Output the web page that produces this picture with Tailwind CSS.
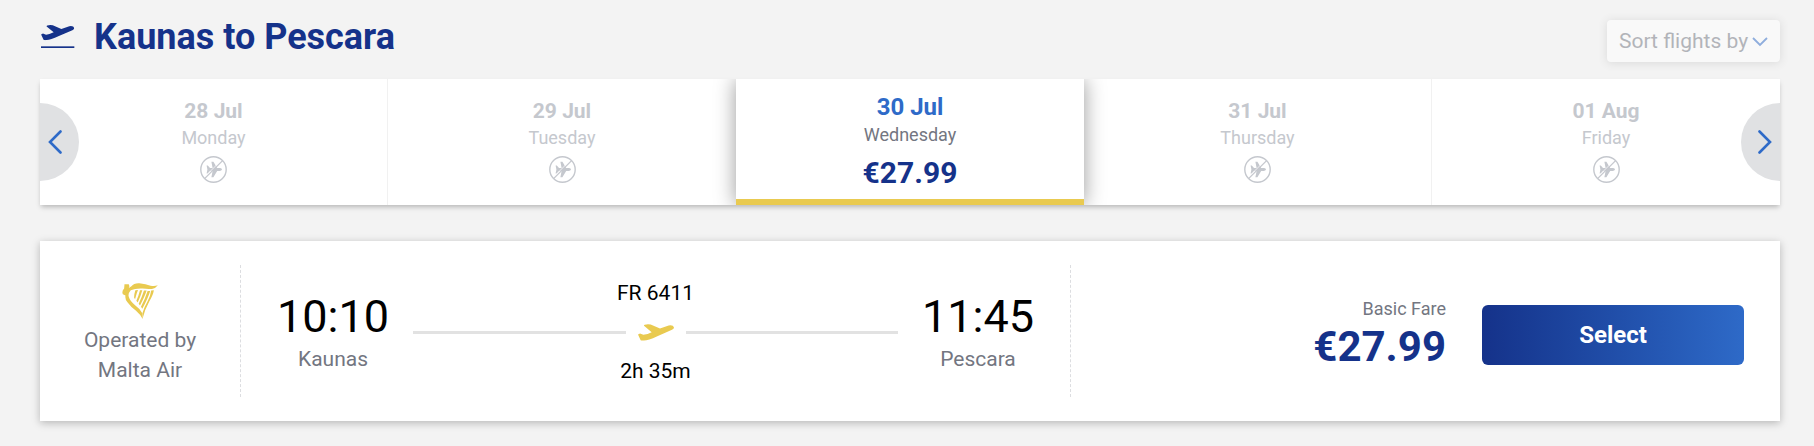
<!DOCTYPE html>
<html lang="en">
<head>
  <meta charset="UTF-8" />
  <meta name="viewport" content="width=device-width, initial-scale=1.0" />
  <title>Kaunas to Pescara</title>
  <script src="https://cdn.jsdelivr.net/npm/@tailwindcss/browser@4"></script>
</head>

<body class="bg-[#f3f3f3] min-h-screen pl-10 pr-[34px] pt-4 font-[Roboto,sans-serif] text-[21px] text-[#737681]">
  <!-- Shared icons -->
  <svg class="hidden">
    <symbol id="plane" viewBox="0 0 108 50">
      <path d="M0 31 L6 28 L16 32 Q26 32 41 24 L18 5 Q17 3 20 2 L30 0 L38 1 L66 13 L92 4 Q106 2 108 10 Q108 14 102 17 L58 36 Q30 49 18 49 Q10 50 8 48 Z" />
    </symbol>
    <symbol id="no-flights" viewBox="0 0 27 27">
      <path d="M6.6 9.6 H7.8 L10 12.1 H12.6 L11.4 5.8 H13.4 L17.2 12.1 H20 Q22 12.5 22 13.5 Q22 14.5 20 14.9 H17.2 L13.4 21.2 H11.4 L12.6 14.9 H10 L7.8 17.4 H6.6 L7.4 13.5 Z" fill="currentColor" />
      <path d="M4 21.6 L21.6 4" stroke="#fff" stroke-width="0.8" />
      <path d="M4.6 22.6 L22.6 4.6" stroke="currentColor" stroke-width="1.3" />
      <circle cx="13.5" cy="13.5" r="12.7" fill="none" stroke="currentColor" stroke-width="1.4" />
    </symbol>
  </svg>

  <header class="flex items-start justify-between mb-[17px]">
    <h1 class="flex items-center gap-[19px] text-4xl leading-[42px] font-bold text-[#15328a]">
      <svg class="w-[35px] h-6" viewBox="0 0 105 72" fill="currentColor" aria-hidden="true">
        <use href="#plane" x="3" y="0" width="100" height="46" />
        <rect x="3" y="64" width="100" height="5" />
      </svg>
      Kaunas to Pescara
    </h1>
    <div class="relative mt-1 opacity-50">
      <select aria-label="Sort flights by" class="appearance-none block w-[173px] h-[42px] pl-3 rounded bg-white text-[#737681] leading-6 shadow-[0_1px_8px_rgba(0,0,0,0.2)]">
        <option>Sort flights by</option>
      </select>
      <svg class="absolute right-3 top-[17px] w-4 h-[10px] pointer-events-none" viewBox="0 0 16 10" fill="none" stroke="#2e6ac8" stroke-width="1.8" aria-hidden="true">
        <path d="M1 1 L8 8 L15 1" />
      </svg>
    </div>
  </header>

  <!-- Date carousel -->
  <nav class="relative mb-9 shadow-[0_3px_5px_-1px_rgba(0,0,0,0.25)]" aria-label="Dates">
    <ul class="grid grid-cols-5 h-[126px] bg-white text-center text-[#c5c8ce] overflow-hidden">
      <li class="border-r border-[#f1f1f1]">
        <button class="w-full h-full flex flex-col items-center pt-[19px]">
          <span class="font-bold leading-[26px]">28 Jul</span>
          <span class="text-lg leading-7">Monday</span>
          <svg class="w-[27px] h-[27px] mt-1" aria-label="No flights"><use href="#no-flights" /></svg>
        </button>
      </li>
      <li>
        <button class="w-full h-full flex flex-col items-center pt-[19px]">
          <span class="font-bold leading-[26px]">29 Jul</span>
          <span class="text-lg leading-7">Tuesday</span>
          <svg class="w-[27px] h-[27px] mt-1" aria-label="No flights"><use href="#no-flights" /></svg>
        </button>
      </li>
      <li class="relative z-10">
        <button class="w-full h-full flex flex-col items-center pt-[14px] bg-white border-b-6 border-[#e9ca50] shadow-[0_0_20px_rgba(0,0,0,0.4)]" aria-current="date">
          <span class="text-2xl leading-7 font-bold text-[#2e6ac8]">30 Jul</span>
          <span class="text-lg leading-7 text-[#737681]">Wednesday</span>
          <span class="mt-2 text-3xl leading-8 font-bold text-[#15328a]">€27.99</span>
        </button>
      </li>
      <li class="border-r border-[#f1f1f1]">
        <button class="w-full h-full flex flex-col items-center pt-[19px]">
          <span class="font-bold leading-[26px]">31 Jul</span>
          <span class="text-lg leading-7">Thursday</span>
          <svg class="w-[27px] h-[27px] mt-1" aria-label="No flights"><use href="#no-flights" /></svg>
        </button>
      </li>
      <li>
        <button class="w-full h-full flex flex-col items-center pt-[19px]">
          <span class="font-bold leading-[26px]">01 Aug</span>
          <span class="text-lg leading-7">Friday</span>
          <svg class="w-[27px] h-[27px] mt-1" aria-label="No flights"><use href="#no-flights" /></svg>
        </button>
      </li>
    </ul>
    <button class="absolute z-20 left-0 top-6 w-[39px] h-[78px] pl-2 rounded-r-full bg-[#e0e1e3] text-[#2e6ac8]" aria-label="Previous dates">
      <svg class="w-[14px] h-6" viewBox="0 0 14 24" fill="none" stroke="currentColor" stroke-width="2.6" stroke-linecap="round"><path d="M12.5 1.5 L2 12 L12.5 22.5" /></svg>
    </button>
    <button class="absolute z-20 right-0 top-6 w-[39px] h-[78px] pr-2 flex items-center justify-end rounded-l-full bg-[#e0e1e3] text-[#2e6ac8]" aria-label="Next dates">
      <svg class="w-[14px] h-6" viewBox="0 0 14 24" fill="none" stroke="currentColor" stroke-width="2.6" stroke-linecap="round"><path d="M1.5 1.5 L12 12 L1.5 22.5" /></svg>
    </button>
  </nav>

  <!-- Flight card -->
  <main class="grid grid-cols-[201px_830fr_709fr] h-[180px] py-6 bg-white shadow-[0_2px_8px_rgba(0,0,0,0.25)]">
    <div class="flex flex-col items-center pt-[18px] border-r border-dashed border-[#dcdde0]">
      <svg class="w-9 h-9 mb-1.5" viewBox="0 0 108 109" fill="#e9ca50" aria-hidden="true">
        <path d="M7 4 L20 4 L22 10 L20 15 L28 10 Q36 0 52 1 Q72 4 86 8 Q98 10 108 7 Q102 16 90 18 Q76 19 62 17 Q40 16 26 22 Q17 32 20 42 Q24 56 40 68 Q54 78 60 90 Q63 100 62 109 Q56 96 42 84 Q26 72 16 58 Q8 50 10 38 L2 34 Q-2 24 6 17 Z" />
        <path d="M88 23 L96 22 Q94 36 82 56 Q68 82 63 104 L61 92 Q66 74 77 55 Q86 38 88 23 Z" />
        <path d="M40 22 L48 21 L44 32 L39 49 L36 44 Q36 34 40 22 Z M54 22 L61 22 L55 40 L47 59 L43 54 Q50 38 54 22 Z M66 23 L74 23 Q68 42 54 68 L50 63 Q60 42 66 23 Z M77 24 L85 24 Q78 46 61 78 L57 72 Q70 46 77 24 Z" />
      </svg>
      <p class="text-center leading-[30px]">Operated by<br />Malta Air</p>
    </div>

    <div class="flex items-start justify-between gap-6 px-9 border-r border-dashed border-[#dcdde0]">
      <div class="text-center pt-[26px]">
        <div class="text-[45px] leading-[52px] text-black">10:10</div>
        <div class="leading-8">Kaunas</div>
      </div>
      <div class="flex-1 flex flex-col pt-[13px] text-center text-black">
        <div class="leading-[30px]">FR 6411</div>
        <div class="flex items-center h-12">
          <span class="flex-1 h-[3px] bg-[#e2e2e2]"></span>
          <svg class="w-9 h-[17px] mx-3 text-[#e9ca50]" fill="currentColor" aria-hidden="true"><use href="#plane" /></svg>
          <span class="flex-1 h-[3px] bg-[#e2e2e2]"></span>
        </div>
        <div class="leading-[30px]">2h 35m</div>
      </div>
      <div class="text-center pt-[26px]">
        <div class="text-[45px] leading-[52px] text-black">11:45</div>
        <div class="leading-8">Pescara</div>
      </div>
    </div>

    <div class="flex items-center justify-end gap-9 pt-2 pr-9">
      <div class="text-right">
        <div class="text-lg leading-6">Basic Fare</div>
        <div class="text-[42px] leading-[52px] font-bold text-[#15328a]">€27.99</div>
      </div>
      <button class="w-[262px] h-[60px] rounded-md bg-linear-to-r from-[#15328a] to-[#2e6ac8] text-2xl font-bold text-white">Select</button>
    </div>
  </main>
</body>
</html>
